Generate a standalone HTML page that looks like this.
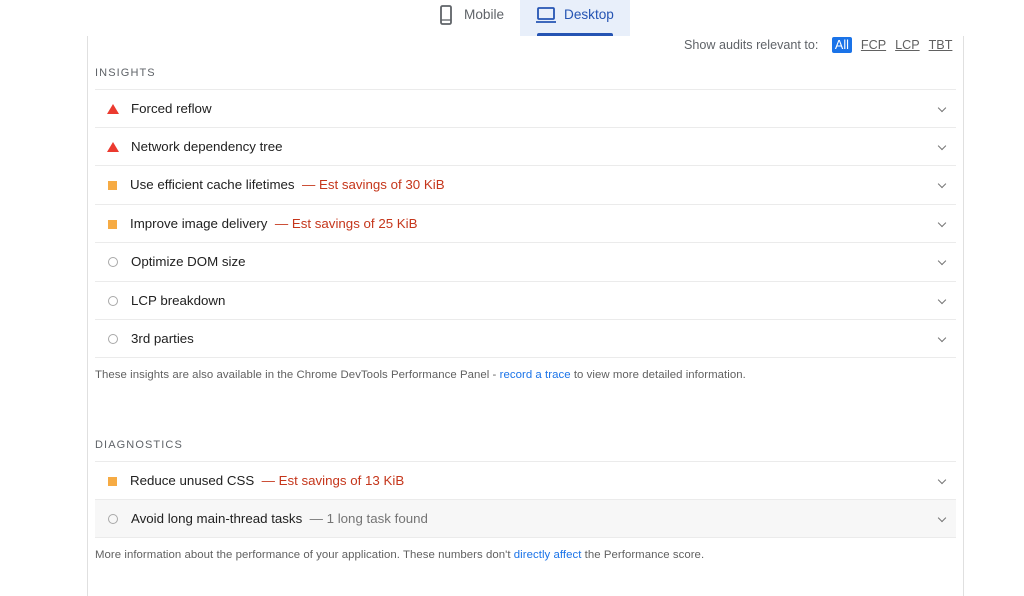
<!DOCTYPE html>
<html><head><style>
*{margin:0;padding:0;box-sizing:border-box}
body{width:1024px;height:575px;overflow:hidden;background:#fff;font-family:"Liberation Sans",Arial,sans-serif;color:#212121;position:relative}
.card{position:absolute;left:87px;top:36px;width:877px;height:560px;border-left:1px solid #e0e0e0;border-right:1px solid #e0e0e0}
.tab{position:absolute;top:0;height:36px;font-size:13.6px;line-height:30px}
.hdr{position:absolute;left:95px;font-size:11px;letter-spacing:1.1px;color:#5f6368}
.row{position:absolute;left:95px;width:861px;height:38px;border-top:1px solid #ebebeb;font-size:13.3px;line-height:38px}
.row .t{position:absolute;left:36px;top:0;white-space:nowrap}
.row .t.sq{left:35px}
.sav{color:#c5361b}
.mut{color:#757575}
.ic{position:absolute;left:13px;top:14px}
.tri{width:0;height:0;border-left:6px solid transparent;border-right:6px solid transparent;border-bottom:10px solid #eb3a2f;top:14px;left:12px}
.sqi{width:9px;height:9px;background:#f6ab44;top:15px}
.ci{width:10px;height:10px;border:1.5px solid #a8a8a8;border-radius:50%;top:14px;left:13px}
.chev{position:absolute;right:11px;top:15px;width:6px;height:6px;border-right:1.2px solid #757575;border-bottom:1.2px solid #757575;transform:rotate(45deg)}
.note{position:absolute;left:95px;font-size:11.4px;letter-spacing:0.05px;color:#616161;white-space:nowrap}
.note a{color:#1a73e8;text-decoration:none}
.flt{position:absolute;top:38px;font-size:12.6px;color:#5f6368;white-space:nowrap}
.flt u{margin-left:9px;color:#616161}
</style></head><body>
<div class="card"></div>
<div class="tab" style="left:430px;width:90px;color:#5f6368">
 <svg style="position:absolute;left:10px;top:5px" width="12" height="20" viewBox="0 0 12 20"><rect x="1" y="1" width="10" height="18" rx="1.5" fill="none" stroke="#5f6368" stroke-width="1.8"/><line x1="1" y1="15" x2="11" y2="15" stroke="#5f6368" stroke-width="1.3"/></svg>
 <span style="position:absolute;left:34px;top:0">Mobile</span></div>
<div class="tab" style="left:520px;width:110px;background:#e8effa;color:#2554b3">
 <svg style="position:absolute;left:16px;top:7px" width="20" height="16" viewBox="0 0 20 16"><rect x="2" y="1" width="16" height="11" rx="1" fill="none" stroke="#2554b3" stroke-width="1.8"/><line x1="0" y1="15" x2="20" y2="15" stroke="#2554b3" stroke-width="1.8"/></svg>
 <span style="position:absolute;left:44px;top:0">Desktop</span>
 <div style="position:absolute;left:17px;bottom:0;width:76px;height:3px;background:#2554b3;border-radius:2px 2px 0 0"></div></div>
<div class="flt" style="left:684px">Show audits relevant to:
 <span style="background:#1a73e8;color:#fff;padding:1px 3px;border-radius:2px;margin-left:10px">All</span><u>FCP</u><u>LCP</u><u>TBT</u></div>
<div class="hdr" style="top:67px">INSIGHTS</div>
<div class="row" style="top:89px"><i class="ic tri"></i><span class="t">Forced reflow</span><i class="chev"></i></div>
<div class="row" style="top:127px"><i class="ic tri"></i><span class="t">Network dependency tree</span><i class="chev"></i></div>
<div class="row" style="top:165px"><i class="ic sqi"></i><span class="t sq">Use efficient cache lifetimes &nbsp;<span class="sav">— Est savings of 30 KiB</span></span><i class="chev"></i></div>
<div class="row" style="top:204px"><i class="ic sqi"></i><span class="t sq">Improve image delivery &nbsp;<span class="sav">— Est savings of 25 KiB</span></span><i class="chev"></i></div>
<div class="row" style="top:242px"><i class="ic ci"></i><span class="t">Optimize DOM size</span><i class="chev"></i></div>
<div class="row" style="top:281px"><i class="ic ci"></i><span class="t">LCP breakdown</span><i class="chev"></i></div>
<div class="row" style="top:319px;border-bottom:1px solid #ebebeb;height:39px"><i class="ic ci"></i><span class="t">3rd parties</span><i class="chev"></i></div>
<div class="note" style="top:369px">These insights are also available in the Chrome DevTools Performance Panel - <a>record a trace</a> to view more detailed information.</div>
<div class="hdr" style="top:439px">DIAGNOSTICS</div>
<div class="row" style="top:461px"><i class="ic sqi"></i><span class="t sq">Reduce unused CSS &nbsp;<span class="sav">— Est savings of 13 KiB</span></span><i class="chev"></i></div>
<div class="row" style="top:499px;background:#f7f7f7;border-bottom:1px solid #ebebeb;height:39px"><i class="ic ci"></i><span class="t">Avoid long main-thread tasks &nbsp;<span class="mut">— 1 long task found</span></span><i class="chev"></i></div>
<div class="note" style="top:549px">More information about the performance of your application. These numbers don't <a>directly affect</a> the Performance score.</div>
</body></html>
